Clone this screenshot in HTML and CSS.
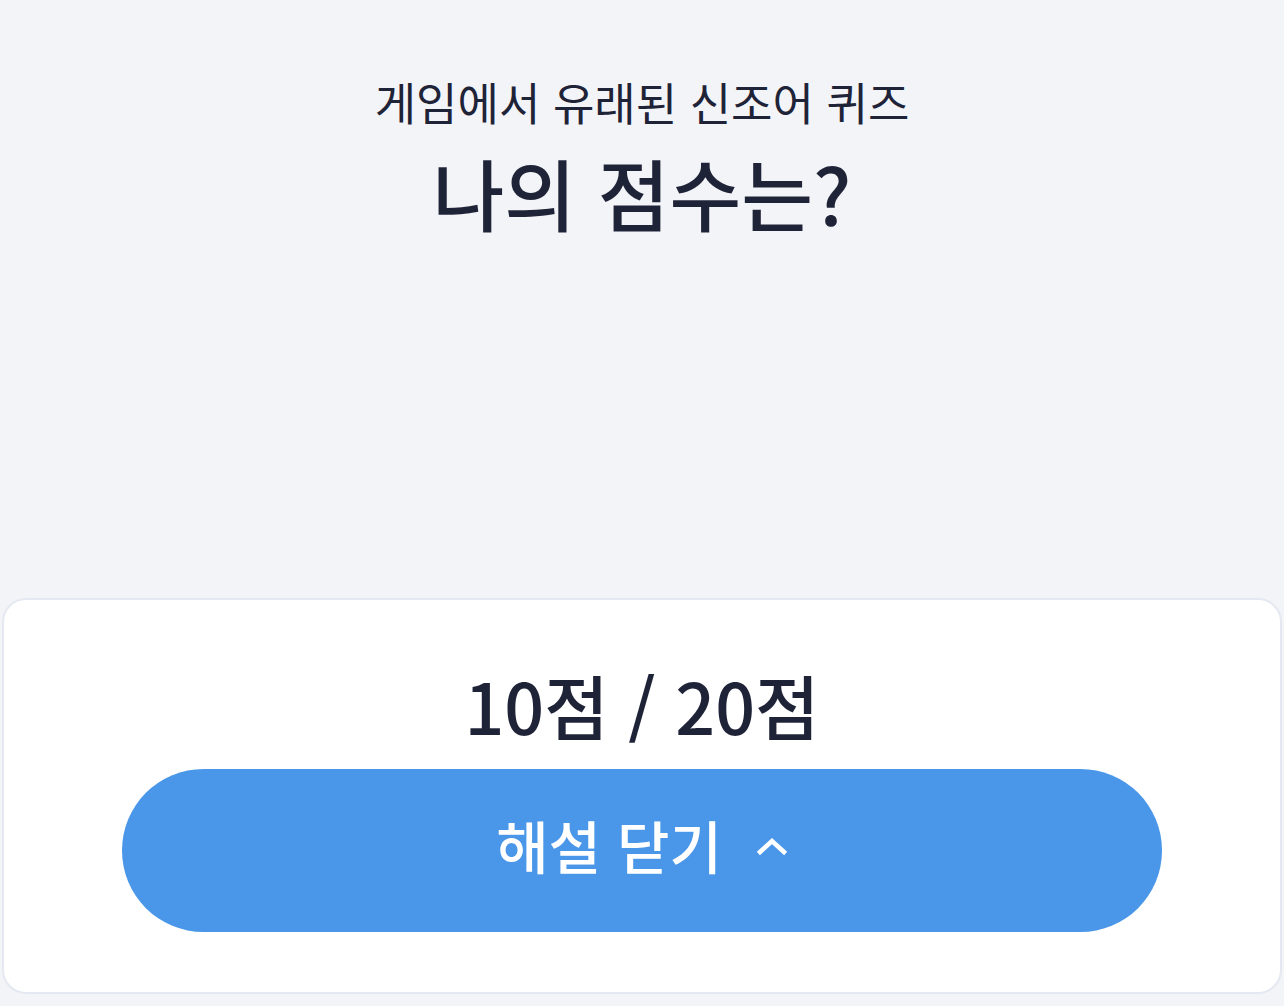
FILE: index.html
```html
<!DOCTYPE html>
<html lang="ko">
<head>
    <meta charset="UTF-8">
    <meta name="viewport" content="width=device-width, initial-scale=1.0">
    <title>게임에서 유래된 신조어 퀴즈 - 결과</title>
    <link rel="stylesheet" href="styles.css">
</head>
<body>
    <div class="page">
        <header class="result-header">
            <p class="quiz-name">게임에서 유래된 신조어 퀴즈</p>
            <h1 class="result-title">나의 점수는?</h1>
        </header>

        <section class="score-card">
            <p class="score">10점 / 20점</p>
            <button type="button" class="toggle-btn">
                <span>해설 닫기</span>
                <svg class="chevron" width="32" height="20" viewBox="0 0 32 20" fill="none">
                    <path d="M4 16 L16 5 L28 16" stroke="#fff" stroke-width="4.5" stroke-linecap="square"/>
                </svg>
            </button>
        </section>
    </div>
</body>
</html>
```

FILE: styles.css
```css
* {
    box-sizing: border-box;
    margin: 0;
    padding: 0;
}

body {
    background-color: #f2f4f8;
    color: #1f2337;
    font-family: "Noto Sans CJK KR", "Noto Sans", sans-serif;
}

.page {
    min-height: 100vh;
    display: flex;
    flex-direction: column;
    padding: 0 2px 12px;
}

.result-header {
    text-align: center;
    padding-top: 70px;
}

.quiz-name {
    font-size: 45px;
    font-weight: 400;
    line-height: 64px;
}

.result-title {
    font-size: 78px;
    font-weight: 500;
    line-height: 100px;
    margin-top: 8px;
}

.score-card {
    margin-top: auto;
    background-color: #fff;
    border: 2px solid #e4e8f0;
    border-radius: 24px;
    padding: 60px 118px 60px;
    display: flex;
    flex-direction: column;
    align-items: center;
}

.score {
    font-size: 70px;
    font-weight: 500;
    line-height: 90px;
    margin-bottom: 19px;
}

.toggle-btn {
    width: 100%;
    height: 163px;
    border: none;
    border-radius: 82px;
    background-color: #4a97e9;
    color: #fff;
    font-family: inherit;
    font-size: 57px;
    font-weight: 500;
    padding-bottom: 14px;
    display: flex;
    align-items: center;
    justify-content: center;
    gap: 34px;
    cursor: pointer;
}

.chevron {
    margin-top: 4px;
}
```
